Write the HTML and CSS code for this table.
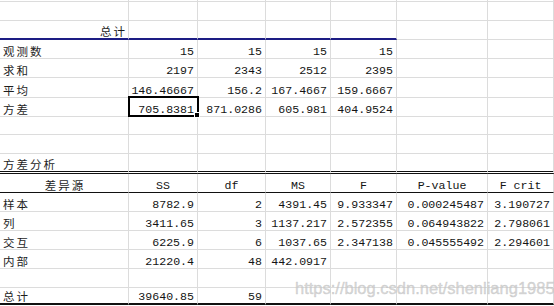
FILE: index.html
```html
<!DOCTYPE html>
<html lang="zh">
<head>
<meta charset="utf-8">
<title>方差分析</title>
<link rel="stylesheet" href="styles.css">
</head>
<body>
<div class="sheet">
  <div class="row h2"><div class="c"></div><div class="c"></div><div class="c"></div><div class="c"></div><div class="c"></div><div class="c"></div><div class="c"></div></div>
  <div class="row h19"><div class="c"></div><div class="c"></div><div class="c"></div><div class="c"></div><div class="c"></div><div class="c"></div><div class="c"></div></div>
  <div class="row h19"><div class="c r cjk blue">总计</div><div class="c blue"></div><div class="c blue"></div><div class="c blue"></div><div class="c blue"></div><div class="c"></div><div class="c"></div></div>
  <div class="row h19"><div class="c cjk">观测数</div><div class="c r">15</div><div class="c r">15</div><div class="c r">15</div><div class="c r">15</div><div class="c"></div><div class="c"></div></div>
  <div class="row h19"><div class="c cjk">求和</div><div class="c r">2197</div><div class="c r">2343</div><div class="c r">2512</div><div class="c r">2395</div><div class="c"></div><div class="c"></div></div>
  <div class="row h20"><div class="c cjk">平均</div><div class="c r">146.46667</div><div class="c r">156.2</div><div class="c r">167.4667</div><div class="c r">159.6667</div><div class="c"></div><div class="c"></div></div>
  <div class="row h19"><div class="c cjk">方差</div><div class="c r selected">705.8381</div><div class="c r">871.0286</div><div class="c r">605.981</div><div class="c r">404.9524</div><div class="c"></div><div class="c"></div></div>
  <div class="row h18"><div class="c"></div><div class="c"></div><div class="c"></div><div class="c"></div><div class="c"></div><div class="c"></div><div class="c"></div></div>
  <div class="row h19"><div class="c"></div><div class="c"></div><div class="c"></div><div class="c"></div><div class="c"></div><div class="c"></div><div class="c"></div></div>
  <div class="row h20 dbl"><div class="c cjk">方差分析</div><div class="c"></div><div class="c"></div><div class="c"></div><div class="c"></div><div class="c"></div><div class="c"></div></div>
  <div class="row h19 head"><div class="c m cjk">差异源</div><div class="c m">SS</div><div class="c m">df</div><div class="c m">MS</div><div class="c m">F</div><div class="c m">P-value</div><div class="c m">F crit</div></div>
  <div class="row h19"><div class="c cjk">样本</div><div class="c r">8782.9</div><div class="c r">2</div><div class="c r">4391.45</div><div class="c r">9.933347</div><div class="c r">0.000245487</div><div class="c r">3.190727</div></div>
  <div class="row h19"><div class="c cjk">列</div><div class="c r">3411.65</div><div class="c r">3</div><div class="c r">1137.217</div><div class="c r">2.572355</div><div class="c r">0.064943822</div><div class="c r">2.798061</div></div>
  <div class="row h19"><div class="c cjk">交互</div><div class="c r">6225.9</div><div class="c r">6</div><div class="c r">1037.65</div><div class="c r">2.347138</div><div class="c r">0.045555492</div><div class="c r">2.294601</div></div>
  <div class="row h19"><div class="c cjk">内部</div><div class="c r">21220.4</div><div class="c r">48</div><div class="c r">442.0917</div><div class="c"></div><div class="c"></div><div class="c"></div></div>
  <div class="row h19"><div class="c"></div><div class="c"></div><div class="c"></div><div class="c"></div><div class="c"></div><div class="c"></div><div class="c"></div></div>
  <div class="row h17 last"><div class="c cjk">总计</div><div class="c r">39640.85</div><div class="c r">59</div><div class="c"></div><div class="c"></div><div class="c"></div><div class="c"></div></div>
  <div class="watermark">https://blog.csdn.net/shenliang1985</div>
</div>
</body>
</html>
```
FILE: styles.css
```css
html, body {
  margin: 0;
  padding: 0;
  background: #ffffff;
}

.sheet {
  position: relative;
  width: 554px;
  height: 306px;
  overflow: hidden;
  background: #ffffff;
  color: #141414;
  font-family: "Liberation Mono", "DejaVu Sans Mono", monospace;
  font-size: 11.6px;
}

.row {
  display: grid;
  grid-template-columns: 129px 69px 68px 65px 66px 91px 66px;
}

.h2 { height: 2px; }
.h17 { height: 17px; }
.h18 { height: 18px; }
.h19 { height: 19px; }
.h20 { height: 20px; }

.c {
  box-sizing: border-box;
  display: flex;
  align-items: flex-end;
  justify-content: flex-start;
  padding: 0 3px 0 3px;
  line-height: 13px;
  white-space: nowrap;
  border-right: 1px solid #dcdcdc;
  border-bottom: 1px solid #dcdcdc;
  min-width: 0;
}

.c.r { justify-content: flex-end; }
.c.m { justify-content: center; }

.cjk {
  font-family: "Noto Sans CJK SC", "Liberation Sans", sans-serif;
  font-size: 11.5px;
  letter-spacing: 2px;
  color: #1e1e1e;
}

.c.r.cjk { padding-right: 1px; }
.c.m.cjk { padding-left: 5px; }

.blue { border-bottom: 2px solid #1d1d84; }

.dbl .c { border-bottom: 3px double #111111; }

.head .c { border-bottom: 1px solid #111111; }

.last .c { border-bottom: 2px solid #111111; }

.selected { position: relative; }

.selected::before {
  content: "";
  position: absolute;
  top: -2px;
  left: -1px;
  right: -2px;
  bottom: -1px;
  border: 2px solid #000000;
}

.selected::after {
  content: "";
  position: absolute;
  right: -3px;
  bottom: -2px;
  width: 4px;
  height: 4px;
  background: #000000;
  border: 1px solid #ffffff;
}

.watermark {
  position: absolute;
  left: 295px;
  top: 279px;
  font-family: "Liberation Sans", Arial, sans-serif;
  font-size: 16.5px;
  color: rgba(205, 205, 205, 0.75);
  -webkit-text-stroke: 0.4px rgba(170, 170, 170, 0.5);
  white-space: nowrap;
  pointer-events: none;
}
```
